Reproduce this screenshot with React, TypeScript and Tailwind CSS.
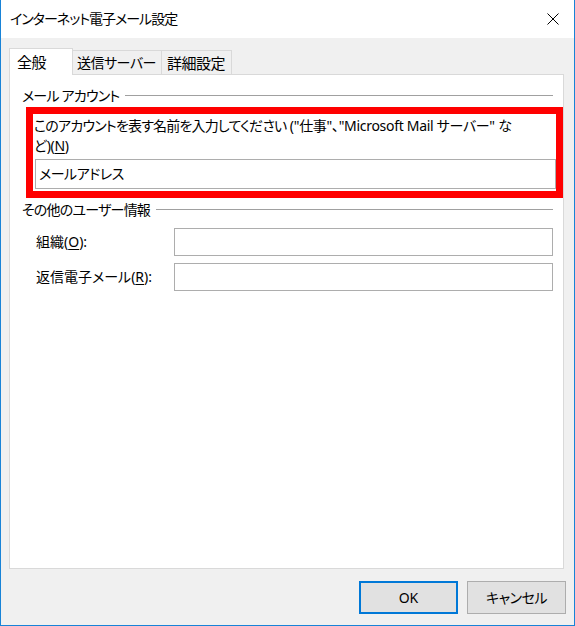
import React from 'react'

const font = "font-['Noto_Sans','Noto_Sans_CJK_JP',sans-serif] [font-feature-settings:'palt']"

function GroupHeader({ title }: { title: string }) {
  return (
    <div className="flex items-center pl-[12px] pr-[10px] h-[20px]">
      <span className="tracking-[-0.8px]">{title}</span>
      <div className="flex-1 h-px bg-[#a0a0a0] ml-[6px] -mt-[1px]" />
    </div>
  )
}

function Field({ label, keyChar, className }: { label: string; keyChar: string; className?: string }) {
  return (
    <div className={`flex items-center pl-[26px] pr-[10px] ${className ?? ''}`}>
      <span className="w-[138px] shrink-0">
        {label}(<span className="underline underline-offset-2">{keyChar}</span>):
      </span>
      <div className="flex-1 h-[28px] bg-white border border-[#adadad]" />
    </div>
  )
}

export default function App() {
  return (
    <div className={`w-[575px] h-[626px] flex flex-col bg-[#f0f0f0] border-x border-b border-[#1883d7] text-black text-[14px] leading-[20px] ${font}`}>
      <div className="h-[38px] shrink-0 bg-white flex items-center justify-between pl-[9px] pr-[15px]">
        <span className="tracking-[-1px]">インターネット電子メール設定</span>
        <svg width="12" height="12" viewBox="0 0 12 12" fill="none" stroke="#000" strokeWidth="1">
          <path d="M0.5 0.5 L11.5 11.5 M11.5 0.5 L0.5 11.5" />
        </svg>
      </div>

      <div className="flex-1 flex flex-col pt-[10px]">
        <div className="flex items-end h-[26px] pl-[8px] relative z-10 tracking-[-0.5px]">
          <div className="w-[64px] h-[27px] -mb-px bg-white border-x border-t border-[#d9d9d9] flex items-center pl-[7px] pb-[1px] text-[15px]">
            全般
          </div>
          <div className="w-[89px] h-[24px] border-t border-r border-[#d9d9d9] flex items-center pl-[4px] whitespace-nowrap">
            送信サーバー
          </div>
          <div className="w-[70px] h-[24px] border-t border-r border-[#d9d9d9] flex items-center pl-[5px] text-[15px]">
            詳細設定
          </div>
        </div>

        <div className="flex-1 ml-[8px] mr-[10px] bg-white border border-[#d9d9d9] flex flex-col pt-[11px]">
          <GroupHeader title="メール アカウント" />

          <div className="ml-[16px] mt-[1px] border-[7px] border-[#ff0000] pt-[2px] pb-[2px] pl-[1px]">
            <p className="whitespace-nowrap tracking-[-0.3px]">
              <span className="tracking-[-0.8px]">このアカウントを表す名前を入力してください</span> ("仕事"、"Microsoft Mail サーバー" な
              <br />
              ど)(<span className="underline underline-offset-2">N</span>)
            </p>
            <div className="mt-[3px] ml-[1px] h-[30px] bg-white border border-[#adadad] flex items-center pl-[3px] tracking-[-0.5px]">
              メールアドレス
            </div>
          </div>

          <div className="mt-[2px]">
            <GroupHeader title="その他のユーザー情報" />
          </div>

          <Field label="組織" keyChar="O" className="mt-[8px]" />
          <Field label="返信電子メール" keyChar="R" className="mt-[7px]" />
        </div>

        <div className="flex justify-end gap-[9px] pt-[12px] pb-[11px] pr-[8px]">
          <button className="w-[99px] h-[33px] bg-[#e1e1e1] border-2 border-[#0078d7] flex items-center justify-center">
            OK
          </button>
          <button className="w-[99px] h-[33px] bg-[#e1e1e1] border border-[#adadad] flex items-center justify-center tracking-[-0.5px]">
            キャンセル
          </button>
        </div>
      </div>
    </div>
  )
}
